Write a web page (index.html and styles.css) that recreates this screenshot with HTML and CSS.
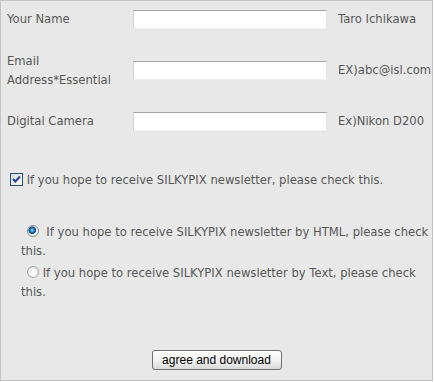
FILE: index.html
```html
<!DOCTYPE html>
<html lang="en">
<head>
  <meta charset="UTF-8">
  <meta name="viewport" content="width=device-width, initial-scale=1.0">
  <title>Download SILKYPIX</title>
  <link rel="stylesheet" href="styles.css">
</head>
<body>
  <form class="panel" onsubmit="return false">
    <div class="fields">
      <label class="field-label" for="name">Your Name</label>
      <input class="field-input" id="name" type="text" name="name">
      <span class="field-ex">Taro Ichikawa</span>

      <label class="field-label" for="email">Email Address*Essential</label>
      <input class="field-input" id="email" type="text" name="email">
      <span class="field-ex">EX)abc@isl.com</span>

      <label class="field-label" for="camera">Digital Camera</label>
      <input class="field-input" id="camera" type="text" name="camera">
      <span class="field-ex">Ex)Nikon D200</span>
    </div>

    <label class="check-row">
      <input class="hidden-input" type="checkbox" name="news" checked>
      <span class="check-box"><svg width="11" height="11" viewBox="0 0 11 11"><path d="M2 5 L4.3 7.5 L9 2.5" fill="none" stroke="#2b3b9c" stroke-width="2"/></svg></span> If you hope to receive SILKYPIX newsletter, please check this.
    </label>

    <div class="radios">
      <label class="radio-row">
        <input class="hidden-input" type="radio" name="format" value="html" checked>
        <span class="radio-dot is-on"></span>&nbsp; If you hope to receive SILKYPIX newsletter by HTML, please check this.
      </label>
      <label class="radio-row">
        <input class="hidden-input" type="radio" name="format" value="text">
        <span class="radio-dot"></span> If you hope to receive SILKYPIX newsletter by Text, please check this.
      </label>
    </div>

    <div class="actions">
      <button type="submit" class="button">agree and download</button>
    </div>
  </form>
</body>
</html>
```

FILE: styles.css
```css
body {
  margin: 0;
  background-color: #fff;
  font-family: "DejaVu Sans", Verdana, sans-serif;
  font-size: 11.6px;
  color: #575757;
}
.panel {
  box-sizing: border-box;
  width: 433px;
  height: 381px;
  border: 1px solid #c3c3c3;
  background-color: #e8e8e8;
  padding: 0 0 0 6px;
}
.fields {
  display: grid;
  grid-template-columns: 126px 194px auto;
  grid-auto-rows: 37px;
  row-gap: 14px;
  align-items: center;
  line-height: 19px;
}
.field-label {
  width: 110px;
}
.field-input {
  box-sizing: border-box;
  width: 194px;
  height: 19px;
  margin: 0;
  border: 1px solid;
  border-color: #a4a4a4 #e2e2e2 #eeeeee #d2d2d2;
  background: #fff;
  font: inherit;
}
.field-ex {
  margin-left: 11px;
  white-space: nowrap;
}
.hidden-input {
  position: absolute;
  width: 1px;
  height: 1px;
  opacity: 0;
  margin: 0;
}
.check-row {
  display: block;
  margin-top: 31px;
  line-height: 19px;
}
.check-box {
  display: inline-block;
  box-sizing: border-box;
  width: 13px;
  height: 13px;
  margin-left: 3px;
  vertical-align: -2px;
  border: 1px solid #1c5180;
  background: linear-gradient(135deg, #dcdcd7, #fbfbf8);
}
.check-box svg {
  display: block;
}
.radios {
  margin-top: 33px;
  padding-left: 14px;
  line-height: 19px;
}
.radio-row {
  display: block;
}
.radio-row + .radio-row {
  margin-top: 3px;
}
.radio-dot {
  display: inline-block;
  box-sizing: border-box;
  width: 12px;
  height: 12px;
  margin-left: 6px;
  vertical-align: -1px;
  border: 1px solid #a2a2a2;
  border-radius: 50%;
  background: radial-gradient(circle at 60% 60%, #ffffff 20%, #dadada 90%);
}
.radio-dot.is-on {
  border-color: #8c8c8c;
  background: radial-gradient(circle at 42% 42%, #a6e4ff 0, #1f8ad0 22%, #0a3f7a 42%, #f4f4f4 50%, #d8d8d8 95%);
}
.actions {
  display: flex;
  justify-content: center;
  margin-top: 48px;
  padding-right: 6px;
}
.button {
  box-sizing: border-box;
  width: 130px;
  height: 20px;
  padding: 0;
  border: 1px solid #6f6f6f;
  border-radius: 3px;
  background: linear-gradient(#ffffff, #f1f1f1 55%, #d9d9d9);
  font-family: "Liberation Sans", Arial, sans-serif;
  font-size: 12px;
  color: #000;
  cursor: pointer;
}
```
